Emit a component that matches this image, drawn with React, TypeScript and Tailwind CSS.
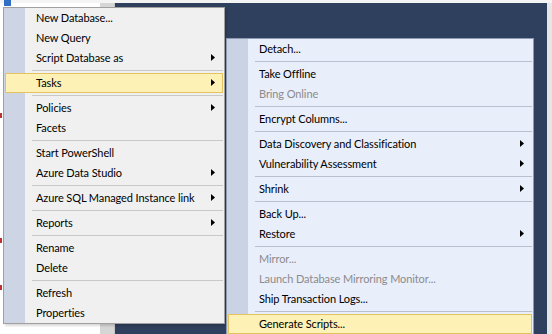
import React from 'react';

type Item =
  | { kind: 'sep' }
  | { kind: 'item'; label: string; sub?: boolean; disabled?: boolean; active?: boolean };

const mainMenu: Item[] = [
  { kind: 'item', label: 'New Database...' },
  { kind: 'item', label: 'New Query' },
  { kind: 'item', label: 'Script Database as', sub: true },
  { kind: 'sep' },
  { kind: 'item', label: 'Tasks', sub: true, active: true },
  { kind: 'sep' },
  { kind: 'item', label: 'Policies', sub: true },
  { kind: 'item', label: 'Facets' },
  { kind: 'sep' },
  { kind: 'item', label: 'Start PowerShell' },
  { kind: 'item', label: 'Azure Data Studio', sub: true },
  { kind: 'sep' },
  { kind: 'item', label: 'Azure SQL Managed Instance link', sub: true },
  { kind: 'sep' },
  { kind: 'item', label: 'Reports', sub: true },
  { kind: 'sep' },
  { kind: 'item', label: 'Rename' },
  { kind: 'item', label: 'Delete' },
  { kind: 'sep' },
  { kind: 'item', label: 'Refresh' },
  { kind: 'item', label: 'Properties' },
];

const tasksMenu: Item[] = [
  { kind: 'item', label: 'Detach...' },
  { kind: 'sep' },
  { kind: 'item', label: 'Take Offline' },
  { kind: 'item', label: 'Bring Online', disabled: true },
  { kind: 'sep' },
  { kind: 'item', label: 'Encrypt Columns...' },
  { kind: 'sep' },
  { kind: 'item', label: 'Data Discovery and Classification', sub: true },
  { kind: 'item', label: 'Vulnerability Assessment', sub: true },
  { kind: 'sep' },
  { kind: 'item', label: 'Shrink', sub: true },
  { kind: 'sep' },
  { kind: 'item', label: 'Back Up...' },
  { kind: 'item', label: 'Restore', sub: true },
  { kind: 'sep' },
  { kind: 'item', label: 'Mirror...', disabled: true },
  { kind: 'item', label: 'Launch Database Mirroring Monitor...', disabled: true },
  { kind: 'item', label: 'Ship Transaction Logs...' },
  { kind: 'sep' },
  { kind: 'item', label: 'Generate Scripts...', active: true },
];

const Arrow = () => (
  <svg width="4" height="7" viewBox="0 0 4 7" className="shrink-0">
    <polygon points="0,0 4,3.5 0,7" fill="#000" />
  </svg>
);

const MenuList = ({ items, sepClass }: { items: Item[]; sepClass: string }) => (
  <>
    {items.map((it, i) =>
      it.kind === 'sep' ? (
        <div key={i} className="h-[5px] flex items-center pl-[28px] pr-[1px]">
          <div className={`h-px w-full ${sepClass}`}></div>
        </div>
      ) : (
        <div
          key={i}
          className={`h-[20px] flex items-center pr-[7px] pb-px mx-px border ${
            it.active
              ? 'border-[#e3c25f] bg-[#fdf1b6] pl-[30px]'
              : 'border-transparent pl-[30px]'
          }`}
        >
          <span
            className={`flex-1 whitespace-nowrap leading-none ${
              it.disabled ? 'text-[#8b8b8b]' : 'text-black'
            }`}
          >
            {it.label}
          </span>
          {it.sub && <Arrow />}
        </div>
      )
    )}
  </>
);

export default function App() {
  return (
    <div
      className="relative w-[552px] h-[334px] overflow-hidden bg-white text-[11px] tracking-[-0.1px]"
      style={{ fontFamily: 'Lato, "Noto Sans", sans-serif' }}
    >
      {/* background window */}
      <div className="h-[3px] bg-[#f4f4f4]"></div>
      <div className="flex h-[331px]">
        <div className="w-[100px] bg-white relative">
          <div className="absolute left-[4px] top-[-3px] w-[7px] h-[6px] bg-[#2f6fc4]"></div>
          <div className="absolute left-0 top-[110px] w-[2px] h-[5px] bg-[#b33]"></div>
          <div className="absolute left-0 top-[235px] w-[2px] h-[5px] bg-[#b33]"></div>
          <div className="absolute left-0 top-[282px] w-[2px] h-[5px] bg-[#b33]"></div>
        </div>
        <div className="w-[15px] bg-[#d6d6d6] border-r border-[#c4c4c4]"></div>
        <div className="flex-1 bg-[#2f3f5e]"></div>
        <div className="w-[5px] bg-[#e6e6e6]"></div>
      </div>

      {/* context menu */}
      <div className="absolute left-[3px] top-[7px] w-[222px] border border-[#a0a0a0] bg-[linear-gradient(to_right,#cdd5e5_21px,#f0f0f0_21px)] shadow-[2px_2px_2px_rgba(0,0,0,0.15)]">
        <MenuList items={mainMenu} sepClass="bg-[#c9c9c9]" />
      </div>

      {/* tasks submenu */}
      <div className="absolute left-[226px] top-[38px] w-[308px] border border-[#8e9ab3] bg-[linear-gradient(to_right,#cad3e4_21px,#e9eefb_21px)]">
        <MenuList items={tasksMenu} sepClass="bg-[#b9c0cf]" />
      </div>
    </div>
  );
}
